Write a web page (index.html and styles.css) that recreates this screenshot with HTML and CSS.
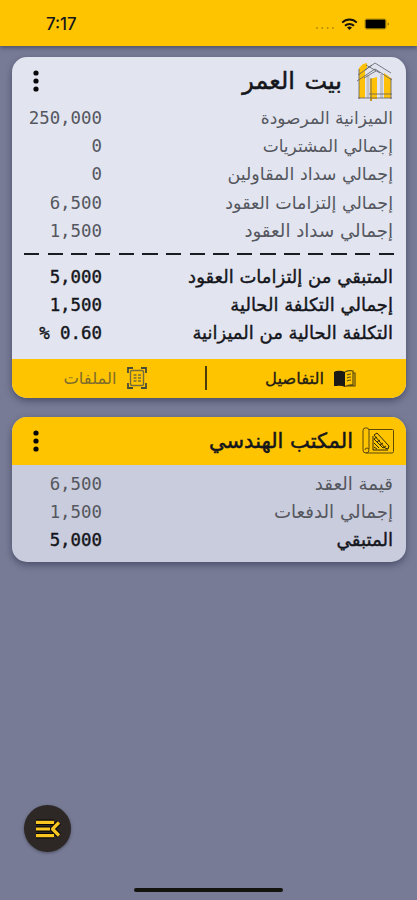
FILE: index.html
```html
<!DOCTYPE html>
<html lang="ar" dir="rtl">
<head>
    <meta charset="UTF-8">
    <meta name="viewport" content="width=device-width, initial-scale=1.0">
    <title>بيت العمر</title>
    <link rel="stylesheet" href="styles.css">
</head>
<body>
    <header class="status-bar" dir="ltr">
        <span class="time">7:17</span>
        <div class="status-icons">
            <svg class="signal" width="20" height="4" viewBox="0 0 20 4" fill="#b58c08">
                <circle cx="2" cy="2" r="1"/><circle cx="7.3" cy="2" r="1"/><circle cx="12.6" cy="2" r="1"/><circle cx="17.9" cy="2" r="1"/>
            </svg>
            <svg class="wifi" width="17" height="13" viewBox="0 0 17 13" fill="none" stroke="#16140a" stroke-width="2">
                <path d="M1.2 4.6C5.3.5 11.7.5 15.8 4.6M4 7.7c2.5-2.4 6.5-2.4 9 0"/>
                <path d="M8.5 12 6 9.4q2.5-2 5 0z" fill="#16140a" stroke="none"/>
            </svg>
            <svg class="battery" width="26" height="12" viewBox="0 0 26 12">
                <rect x=".5" y=".5" width="22" height="11" rx="2.5" fill="none" stroke="#dca904"/>
                <rect x="1.5" y="1.5" width="20" height="9" rx="1" fill="#000"/>
                <path d="M23.8 3.8q1.8 2.2 0 4.4z" fill="#4d3c05"/>
            </svg>
        </div>
    </header>

    <main class="content">
        <section class="card">
            <div class="card-header">
                <svg class="house-icon" width="38" height="40" viewBox="0 0 38 40">
                    <g fill="#ffc107">
                        <path d="M3 7 7 3l4-1v5l-2 3v27H3z"/>
                        <path d="M14 18l7-2v22h-5v2h-2z"/>
                        <path d="M28 12l7 5v20h-7z"/>
                    </g>
                    <path d="M12 14v23M25.500 13v24" fill="none" stroke="#c3c4ca" stroke-width="3"/>
                    <g fill="none" stroke="#5d5e64" stroke-width=".8">
                        <path d="M2 14 19 2l16 10M1 20l18-12 17 11M8 17l12-7M10 4l14 8M9 9l7-5M2 37h34M13 33h23M3 8v30M15 17v23M35 17v21"/>
                    </g>
                </svg>
                <h2>بيت العمر</h2>
                <svg class="menu-dots" width="6" height="22" viewBox="0 0 6 22">
                    <circle cx="3" cy="3" r="2.6"/><circle cx="3" cy="11" r="2.6"/><circle cx="3" cy="19" r="2.6"/>
                </svg>
            </div>
            <div class="rows">
                <div class="row"><span class="label">الميزانية المرصودة</span><span class="value">250,000</span></div>
                <div class="row"><span class="label">إجمالي المشتريات</span><span class="value">0</span></div>
                <div class="row"><span class="label medium">إجمالي سداد المقاولين</span><span class="value">0</span></div>
                <div class="row"><span class="label medium">إجمالي إلتزامات العقود</span><span class="value">6,500</span></div>
                <div class="row"><span class="label large">إجمالي سداد العقود</span><span class="value">1,500</span></div>
            </div>
            <div class="divider"></div>
            <div class="rows totals">
                <div class="row"><span class="label">المتبقي من إلتزامات العقود</span><span class="value">5,000</span></div>
                <div class="row"><span class="label">إجمالي التكلفة الحالية</span><span class="value">1,500</span></div>
                <div class="row"><span class="label">التكلفة الحالية من الميزانية</span><span class="value">% 0.60</span></div>
            </div>
            <div class="card-footer">
                <div class="tab active">
                    <svg width="22" height="17" viewBox="0 0 22 17">
                        <path d="M0 2 2 1q5-1 9 1v15q-4-2-9-1H0z" fill="#1c1b16"/>
                        <path d="M11 2q4-2 8-1v14q-4-.6-8 1.5M19 3h2v13h-9M13 5q2-1 4-1M13 8q2-1 4-1M13 11q2-1 4-1" fill="none" stroke="#5b4a10" stroke-width="1.2"/>
                    </svg>
                    <span>التفاصيل</span>
                </div>
                <div class="separator"></div>
                <div class="tab">
                    <svg width="20" height="22" viewBox="0 0 20 22" fill="none" stroke="#766b3b">
                        <path d="M1 6V1h5M14 1h5v5M19 16v5h-5M6 21H1v-5" stroke="#494b39" stroke-width="1.8"/>
                        <rect x="3.5" y="3.5" width="13" height="15" rx="1.5" stroke-width="1.4"/>
                        <path d="M6.5 8h3M11 8h3M6.5 11h3M11 11h3M6.5 14h3M11 14h3" stroke-width="1.7"/>
                    </svg>
                    <span>الملفات</span>
                </div>
            </div>
        </section>

        <section class="card contract">
            <div class="card-header">
                <svg class="plan-icon" width="32" height="27" viewBox="0 0 32 27" fill="none" stroke="#5a480b">
                    <path d="M7 2.5h23.5q1 0 1 1v21q0 1.500-1.500 1.500H4M7 22V3.500Q7 .8 4 .8T1 3.500V23q0 3 3 3t3-3q0-2-2-2t-2 2"/>
                    <path d="M11 23V9M11 23h15M15 6l12 13-1 3-3-1L12 8zM12 12l9 9M15 10l-3 2M18 13l-3 2M21 16l-3 2M24 19l-3 2M12 16l5 5M12 20l3 2" stroke="#31290b"/>
                </svg>
                <h2>المكتب الهندسي</h2>
                <svg class="menu-dots" width="6" height="22" viewBox="0 0 6 22">
                    <circle cx="3" cy="3" r="2.6"/><circle cx="3" cy="11" r="2.6"/><circle cx="3" cy="19" r="2.6"/>
                </svg>
            </div>
            <div class="rows">
                <div class="row"><span class="label large">قيمة العقد</span><span class="value">6,500</span></div>
                <div class="row"><span class="label large">إجمالي الدفعات</span><span class="value">1,500</span></div>
                <div class="row strong"><span class="label large">المتبقي</span><span class="value">5,000</span></div>
            </div>
        </section>
    </main>

    <div class="fab">
        <svg width="26" height="20" viewBox="0 0 26 20" fill="none" stroke-linejoin="round">
            <path d="M1 3.3h18M1 10h14M1 16.7h18M24 3.5 17.5 10l6.5 6.5" stroke="#080808" stroke-width="5.4"/>
            <path d="M1 3.3h18M1 10h14M1 16.7h18M24 3.5 17.5 10l6.5 6.5" stroke="#f9c520" stroke-width="3.2"/>
        </svg>
    </div>
    <div class="home-indicator"></div>
</body>
</html>
```
FILE: styles.css
```css
* {
    box-sizing: border-box;
}

body {
    margin: 0;
    height: 900px;
    display: flex;
    flex-direction: column;
    background: #777b95;
    font-family: "DejaVu Sans", sans-serif;
    color: #15161c;
    overflow: hidden;
}

svg {
    display: block;
    flex-shrink: 0;
}

.status-bar {
    height: 46px;
    background: #ffc400;
    padding: 2px 27px 0 46px;
    display: flex;
    align-items: center;
    justify-content: space-between;
    box-shadow: 0 2px 4px rgba(40, 40, 60, 0.5);
}

.time {
    font-family: Inter, sans-serif;
    font-size: 16.8px;
    font-weight: 500;
}

.status-icons {
    display: flex;
    align-items: center;
}

.signal {
    margin: 8px 6px 0 0;
}

.battery {
    margin-left: 6px;
}

.content {
    flex: 1;
    padding: 11px 11px 0 12px;
    display: flex;
    flex-direction: column;
    gap: 19px;
}

.card {
    background: #e2e5ef;
    border-radius: 15px;
    overflow: hidden;
    box-shadow: 0 3px 7px rgba(35, 35, 65, 0.5);
}

.card-header {
    height: 47px;
    padding: 0 12px 0 21px;
    display: flex;
    align-items: center;
}

.card-header h2 {
    flex: 1;
    margin: 0 14px 0 0;
    font-size: 24px;
    font-weight: 400;
    word-spacing: 2px;
    -webkit-text-stroke: 0.5px #15161c;
    line-height: 40px;
}

.menu-dots {
    fill: #08080a;
}

.row {
    height: 28.2px;
    padding: 0 13px;
    display: flex;
    align-items: center;
    justify-content: space-between;
    font-size: 17px;
    line-height: 28px;
    white-space: nowrap;
    color: #55575f;
}

.label.medium {
    font-size: 17.5px;
}

.label.large {
    font-size: 18.2px;
}

.value {
    direction: ltr;
    width: 77px;
    text-align: right;
    font-family: "DejaVu Sans Mono", monospace;
    font-size: 17.4px;
}

.divider {
    height: 2px;
    margin: 8px 12px;
    background: repeating-linear-gradient(to right, #1b1c22 0 15.4px, transparent 15.4px 23.65px);
}

.totals {
    height: 96px;
}

.totals .label {
    font-size: 18px;
}

.totals .row,
.row.strong {
    color: #15161c;
    -webkit-text-stroke: 0.4px #15161c;
}

.card-footer {
    height: 39px;
    background: #ffc400;
    display: flex;
    align-items: center;
}

.tab {
    flex: 1;
    padding-right: 7px;
    display: flex;
    align-items: center;
    justify-content: center;
    gap: 10px;
    font-size: 16.4px;
    color: #7d6c2c;
}

.tab.active {
    flex: 0 0 199px;
    padding: 0 0 0 8px;
    color: #1c1b16;
    -webkit-text-stroke: 0.3px #1c1b16;
}

.separator {
    width: 2px;
    height: 24px;
    background: #4c3e0c;
}

.contract {
    height: 145px;
    background: #c9ccdc;
}

.contract .card-header {
    height: 48px;
    background: #ffc400;
    margin-bottom: 5px;
}

.contract h2 {
    margin-right: 9px;
    font-size: 21px;
    word-spacing: 0;
}

/* floating over the page content */
.fab {
    position: absolute;
    left: 24px;
    top: 805px;
    width: 47px;
    height: 47px;
    border-radius: 50%;
    background: #2d2725;
    display: flex;
    align-items: center;
    justify-content: center;
    box-shadow: 0 1px 3px rgba(30, 30, 40, 0.5);
}

.home-indicator {
    align-self: center;
    width: 149px;
    height: 4px;
    margin-bottom: 8px;
    border-radius: 2px;
    background: #14140f;
}
```
